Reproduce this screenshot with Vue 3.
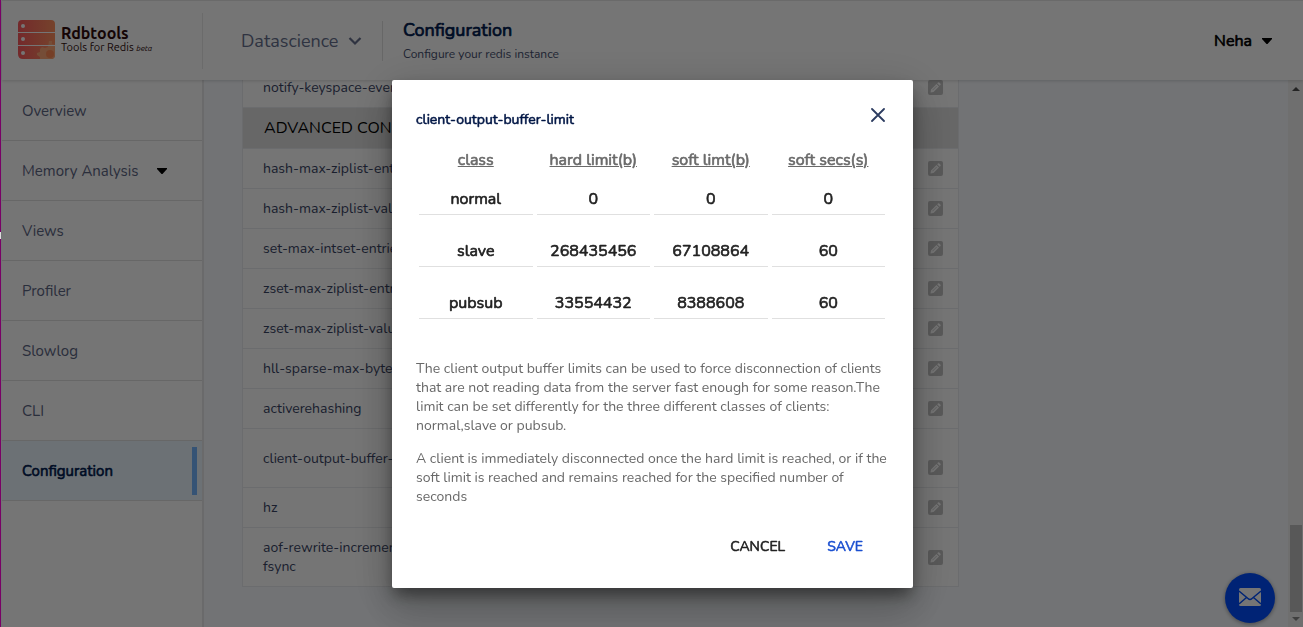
<script setup>
import { reactive } from 'vue'

const navItems = [
  { label: 'Overview' },
  { label: 'Memory Analysis', expandable: true },
  { label: 'Views' },
  { label: 'Profiler' },
  { label: 'Slowlog' },
  { label: 'CLI' },
  { label: 'Configuration', active: true },
]

const settings = [
  { name: 'notify-keyspace-events' },
  { section: 'ADVANCED CONFIG' },
  { name: 'hash-max-ziplist-entries' },
  { name: 'hash-max-ziplist-value' },
  { name: 'set-max-intset-entries' },
  { name: 'zset-max-ziplist-entries' },
  { name: 'zset-max-ziplist-value' },
  { name: 'hll-sparse-max-bytes' },
  { name: 'activerehashing' },
  { name: 'client-output-buffer-limit', tall: true },
  { name: 'hz' },
  { name: 'aof-rewrite-incremental-fsync' },
]

const columns = ['class', 'hard limit(b)', 'soft limt(b)', 'soft secs(s)']
const limits = reactive([
  ['normal', '0', '0', '0'],
  ['slave', '268435456', '67108864', '60'],
  ['pubsub', '33554432', '8388608', '60'],
])
</script>

<template>
  <div class="app">
    <header class="topbar">
      <a class="brand" href="#">
        <svg class="brand-mark" viewBox="0 0 37 39" aria-hidden="true">
          <defs>
            <linearGradient id="brand-fill" x1="0" y1="0" x2="1" y2="0">
              <stop offset="0" stop-color="#fb5a5f" />
              <stop offset="1" stop-color="#ff9260" />
            </linearGradient>
          </defs>
          <path fill="url(#brand-fill)" d="M4 0H33Q37 0 37 4V12H0V4Q0 0 4 0ZM0 13H37V25H0ZM0 26H37V35Q37 39 33 39H5Q0 39 0 34Z" />
          <path fill="#ffa878" d="M31 21h3v3l3 1v10q0 4-4 4H22v-2l-3-2v-2l3-1v-3l2-2 3 1 3-1z" />
          <circle cx="32" cy="34" r="4" fill="#ff8a55" />
          <path d="M0 12.500H37M0 25.500H37" stroke="#fff" stroke-width="1" />
          <g fill="#fff">
            <circle cx="5" cy="6" r="2" />
            <circle cx="5" cy="19" r="2" />
            <circle cx="5" cy="33" r="2" />
          </g>
        </svg>
        <span class="brand-text">
          <strong>Rdbtools</strong>
          <span>Tools for Redis <em>beta</em></span>
        </span>
      </a>
      <button class="instance" type="button">
        Datascience
        <svg width="14" height="10" viewBox="0 0 14 10" aria-hidden="true">
          <path d="M1.500 2L7 7.500L12.500 2" fill="none" stroke="currentColor" stroke-width="2.200" />
        </svg>
      </button>
      <div class="heading">
        <h1>Configuration</h1>
        <p>Configure your redis instance</p>
      </div>
      <button class="user" type="button">
        Neha
        <svg width="10" height="6" viewBox="0 0 10 6" aria-hidden="true"><path d="M0 0H10V1L5.500 6H4.500L0 1Z" /></svg>
      </button>
    </header>

    <div class="body">
      <nav class="sidebar">
        <a v-for="item in navItems" :key="item.label" href="#" :class="{ active: item.active }">
          <span>{{ item.label }}</span>
          <svg v-if="item.expandable" width="10" height="6" viewBox="0 0 10 6" aria-hidden="true"><path d="M0 0H10V1L5.500 6H4.500L0 1Z" /></svg>
          <i v-if="item.active" class="marker"></i>
        </a>
      </nav>

      <main class="content">
        <table class="settings">
          <tbody>
            <tr v-for="(row, i) in settings" :key="i" :class="{ tall: row.tall }">
              <th v-if="row.section" class="section" colspan="3">{{ row.section }}</th>
              <template v-else>
                <td class="name">{{ row.name }}</td>
                <td></td>
                <td class="edit">
                  <button type="button" :aria-label="'Edit ' + row.name">
                    <svg width="15" height="15" viewBox="0 0 15 15" aria-hidden="true">
                      <rect width="15" height="15" rx="2" fill="#c3c3c3" />
                      <path d="M2.500 12.500L3 9.500L8.500 4L11 6.500L5.500 12ZM9.200 3.300L10 2.500Q10.600 2 11.200 2.500L12.500 3.800Q13 4.400 12.500 5L11.700 5.800Z" fill="#fff" />
                      <path d="M4.500 10.200L8.700 6" stroke="#c3c3c3" stroke-width=".7" />
                    </svg>
                  </button>
                </td>
              </template>
            </tr>
          </tbody>
        </table>
      </main>

      <div class="scrollbar" aria-hidden="true">
        <svg width="8" height="4" viewBox="0 0 8 4"><path d="M4 0L8 4H0Z" fill="#505050" /></svg>
        <div class="thumb"></div>
        <svg width="8" height="4" viewBox="0 0 8 4"><path d="M0 0H8L4 4Z" fill="#8a8a8a" /></svg>
      </div>
    </div>

    <button class="chat" type="button" aria-label="Contact support">
      <svg width="22" height="18" viewBox="0 0 22 18" aria-hidden="true">
        <rect width="22" height="18" rx="1.500" fill="#fff" />
        <path d="M0 3L9 10.500Q11 12.500 13 10.500L22 3M0 16L7.500 9.500M22 16L14.500 9.500" fill="none" stroke="#004eff" stroke-width="1.400" />
      </svg>
    </button>

    <div class="backdrop">
      <section class="dialog" role="dialog" aria-labelledby="dialog-title">
        <div class="dialog-head">
          <h2 id="dialog-title">client-output-buffer-limit</h2>
          <button type="button" aria-label="Close">
            <svg width="14" height="14" viewBox="0 0 14 14" aria-hidden="true">
              <path d="M1 1L13 13M13 1L1 13" stroke="#2c3c60" stroke-width="1.800" stroke-linecap="round" />
            </svg>
          </button>
        </div>
        <table class="limits">
          <thead>
            <tr><th v-for="c in columns" :key="c" scope="col">{{ c }}</th></tr>
          </thead>
          <tbody>
            <tr v-for="(row, r) in limits" :key="r">
              <td v-for="(c, k) in columns" :key="c">
                <input v-model="row[k]" type="text" :readonly="k === 0" :aria-label="row[0] + ' ' + c" />
              </td>
            </tr>
          </tbody>
        </table>
        <div class="help">
          <p>The client output buffer limits can be used to force disconnection of clients that are not reading data from the server fast enough for some reason.The limit can be set differently for the three different classes of clients: normal,slave or pubsub.</p>
          <p>A client is immediately disconnected once the hard limit is reached, or if the soft limit is reached and remains reached for the specified number of seconds</p>
        </div>
        <div class="actions">
          <button type="button">CANCEL</button>
          <button type="button" class="primary">SAVE</button>
        </div>
      </section>
    </div>
    <i class="edge"></i>
  </div>
</template>

<style>
body {
  margin: 0;
  overflow: hidden;
}
</style>

<style scoped>
* {
  box-sizing: border-box;
}
.app {
  display: flex;
  flex-direction: column;
  height: 100vh;
  padding-left: 2px;
  background: #f8fbff;
  font-family: Nunito, Lato, "Noto Sans", sans-serif;
  color: #3a4565;
}
button {
  padding: 0;
  border: 0;
  background: none;
  font-family: inherit;
  color: inherit;
  cursor: pointer;
}
a {
  color: inherit;
  text-decoration: none;
}
h1, h2, p {
  margin: 0;
}
/* Emphasis is drawn as thickened regular letterforms */
h1, h2, .user, .sidebar .active, .limits th, .limits input, .actions button {
  font-weight: 400;
  -webkit-text-stroke: .04em currentColor;
}
.topbar {
  display: flex;
  align-items: center;
  flex: none;
  height: 80px;
  padding: 0 31px 0 16px;
  border-top: 1px solid #e6e6e6;
  background: #fff;
  box-shadow: 0 1px 3px rgba(0, 0, 0, .16);
  z-index: 1;
}
.brand {
  display: flex;
  align-items: center;
  gap: 6px;
  width: 185px;
  height: 56px;
  padding-bottom: 2px;
  border-right: 1px solid #e9e9e9;
}
.brand-mark {
  width: 37px;
  height: 39px;
}
.brand-text {
  display: flex;
  flex-direction: column;
  padding-top: 2px;
  font: 11px/14px Ubuntu, "Noto Sans", sans-serif;
  color: #300c0c;
}
.brand-text strong {
  font-size: 16px;
}
.brand-text em {
  font-size: 8px;
}
.instance {
  display: flex;
  align-items: center;
  justify-content: space-between;
  width: 180px;
  height: 40px;
  padding: 0 20px 0 38px;
  border-right: 1px solid #e0e0e0;
  font-size: 18px;
  color: #66708e;
}
.heading {
  flex: 1;
  padding: 0 20px;
}
.heading h1 {
  font-size: 18px;
  line-height: 26px;
  color: #001b50;
}
.heading p {
  font-size: 12px;
  line-height: 22px;
  color: #46506f;
}
.user {
  display: flex;
  align-items: center;
  gap: 10px;
  font-size: 16px;
  color: #000;
}
.body {
  display: flex;
  flex: 1;
  min-height: 0;
}
.sidebar {
  flex: none;
  width: 202px;
  padding-top: 1px;
  border-right: 2px solid #e8e8ea;
  background: #fff;
  font-size: 15px;
  color: #5d6684;
}
.sidebar a {
  display: flex;
  align-items: center;
  height: 60px;
  padding: 0 5px 0 20px;
  border-bottom: 1px solid #e0e0e0;
}
.sidebar svg {
  margin-left: 18px;
  fill: #000;
}
.sidebar .active {
  background: #ebf6ff;
  color: #001b50;
}
.marker {
  width: 5px;
  height: 48px;
  margin-left: auto;
  background: #75b6ff;
}
.content {
  display: flex;
  flex: 1;
  flex-direction: column;
  justify-content: flex-end;
  align-items: flex-start;
  padding: 0 38px 40px;
  overflow: hidden;
}
.settings {
  width: 717px;
  max-width: 100%;
  table-layout: fixed;
  border: 1px solid #eaecef;
  border-top: 0;
  border-spacing: 0;
  background: #fff;
  font-size: 14px;
  line-height: 19px;
}
.settings td,
.settings th {
  height: 40px;
  padding: 10px 20px;
  border-bottom: 1px solid #eaecef;
}
.settings tr:last-child td {
  border-bottom: 0;
}
.settings .name {
  width: 220px;
}
.settings .section {
  height: 41px;
  padding-left: 21px;
  background: #e0e0e0;
  font-size: 16px;
  font-weight: 400;
  text-align: left;
  color: #000;
}
.settings .edit {
  padding: 0 15px 2px;
  text-align: right;
}
.settings .tall td {
  height: 59px;
}
.settings .tall .edit {
  padding-top: 18px;
}
.edit button {
  display: inline-flex;
  vertical-align: middle;
}
.scrollbar {
  display: flex;
  flex: none;
  flex-direction: column;
  align-items: center;
  width: 15px;
  padding: 7px 1px 6px 2px;
  background: #f1f1f1;
}
.thumb {
  width: 100%;
  height: 87px;
  margin: auto 0 5px;
  background: #c1c1c1;
}
.chat {
  position: fixed;
  right: 28px;
  bottom: 4px;
  display: flex;
  align-items: center;
  justify-content: center;
  width: 50px;
  height: 50px;
  padding-bottom: 2px;
  border-radius: 50%;
  background: #004eff;
  box-shadow: 0 1px 4px rgba(0, 0, 0, .4);
  z-index: 2;
}
.backdrop {
  position: fixed;
  inset: 0;
  display: flex;
  justify-content: center;
  align-items: flex-start;
  padding: 80px 0 0 2px;
  background: rgba(0, 0, 0, .54);
  z-index: 3;
}
.dialog {
  width: 521px;
  padding: 24px;
  border-radius: 2px;
  background: #fff;
  box-shadow: 0 11px 15px -7px rgba(0, 0, 0, .2), 0 24px 38px 3px rgba(0, 0, 0, .14), 0 9px 46px 8px rgba(0, 0, 0, .12), 0 8px 16px rgba(0, 0, 0, .3);
}
.dialog-head {
  display: flex;
  justify-content: space-between;
  align-items: flex-start;
  height: 43px;
  padding: 4px 4px 0 0;
}
.dialog-head h2 {
  padding-top: 2px;
  font-size: 14px;
  line-height: 20px;
  color: #001645;
}
.dialog-head button {
  display: flex;
}
.limits {
  width: 100%;
  padding-right: 1px;
  table-layout: fixed;
  border-spacing: 2px;
}
.limits th {
  height: 22px;
  padding: 0 1px;
  font-size: 16px;
  text-decoration: underline;
  color: #6a6a6a;
}
.limits td {
  height: 50px;
  padding: 0 1px;
  vertical-align: top;
}
.limits input {
  display: block;
  width: 100%;
  height: 42px;
  padding: 10px 0 0;
  border: 0;
  border-bottom: 1px solid #e0e0e0;
  background: none;
  font: 400 16px/24px Nunito, Lato, "Noto Sans", sans-serif;
  text-align: center;
  color: #222;
  outline: 0;
}
.help {
  padding-top: 30px;
  font-size: 14px;
  line-height: 19px;
  color: #686868;
}
.help p {
  margin-bottom: 14px;
}
.actions {
  display: flex;
  justify-content: flex-end;
  gap: 10px;
  padding: 8px 10px 0 0;
}
.actions button {
  height: 36px;
  padding: 0 16px;
  font-size: 14px;
  color: #222;
}
.actions .primary {
  color: #1a4fd0;
}
.edge {
  position: fixed;
  inset: 0 auto 0 0;
  width: 1px;
  background: #790066;
  z-index: 4;
}
.edge::after {
  content: "";
  position: absolute;
  top: 232px;
  width: 1px;
  height: 7px;
  background: #ddd;
}
</style>
